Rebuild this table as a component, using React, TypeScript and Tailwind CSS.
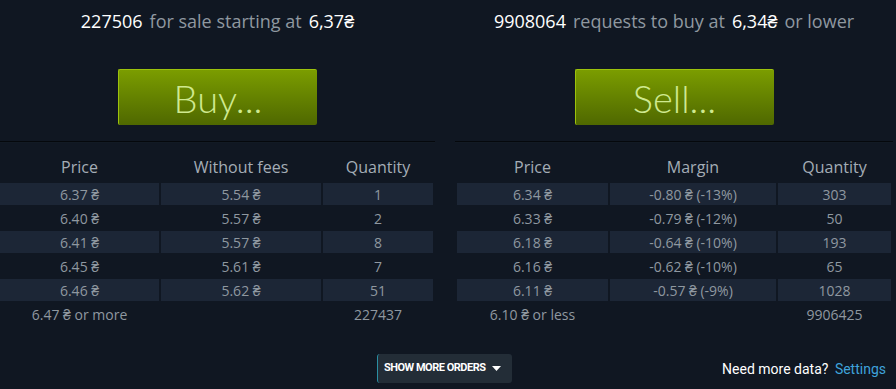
import type { ReactNode } from 'react'

type Row = [string, string, string]

const sellRows: Row[] = [
  ['6.37 ₴', '5.54 ₴', '1'],
  ['6.40 ₴', '5.57 ₴', '2'],
  ['6.41 ₴', '5.57 ₴', '8'],
  ['6.45 ₴', '5.61 ₴', '7'],
  ['6.46 ₴', '5.62 ₴', '51'],
]

const buyRows: Row[] = [
  ['6.34 ₴', '-0.80 ₴ (-13%)', '303'],
  ['6.33 ₴', '-0.79 ₴ (-12%)', '50'],
  ['6.18 ₴', '-0.64 ₴ (-10%)', '193'],
  ['6.16 ₴', '-0.62 ₴ (-10%)', '65'],
  ['6.11 ₴', '-0.57 ₴ (-9%)', '1028'],
]

interface PanelProps {
  summary: ReactNode
  action: string
  headers: Row
  rows: Row[]
  footer: [string, string]
  cols: string
  padLeft: string
}

function OrderPanel({ summary, action, headers, rows, footer, cols, padLeft }: PanelProps) {
  return (
    <div className="flex flex-col">
      <div className="flex h-[42px] items-center justify-center pt-[1px] text-[18px] text-[#8f98a0]">{summary}</div>
      <div className="mt-[27px] flex justify-center">
        <button className="flex h-[56px] w-[199px] items-center justify-center rounded-[2px] border-l border-t border-[#9cc20c] bg-gradient-to-b from-[#7b9d00] to-[#4f6800] font-['Lato',sans-serif] text-[38px] font-light leading-none text-[#cfe98f]">
          {action}
        </button>
      </div>
      <div className="mt-[16px] h-[2px] border-t border-[#05080c] bg-[#121a24]" />
      <div className={`grid gap-[2px] ${padLeft} ${cols} text-center text-[14px] text-[#8f98a0]`}>
        {headers.map((h) => (
          <div key={h} className="flex h-[38px] items-end justify-center pb-[2px] text-[16px] text-[#a4adb6]">
            {h}
          </div>
        ))}
        {rows.map((r, i) =>
          r.map((c, j) => (
            <div
              key={`${i}-${j}`}
              className={`flex h-[22px] items-center justify-center ${i % 2 === 0 ? 'bg-[#1c2636]' : ''}`}
            >
              {c}
            </div>
          )),
        )}
        <div className="flex h-[22px] items-center justify-center">{footer[0]}</div>
        <div />
        <div className="flex h-[22px] items-center justify-center">{footer[1]}</div>
      </div>
    </div>
  )
}

export default function App() {
  return (
    <div className="h-[389px] w-[896px] overflow-hidden bg-[#101722] font-['Open_Sans',sans-serif]">
      <div className="flex gap-[20px]">
        <div className="w-[435px]">
          <OrderPanel
            summary={
              <>
                <span className="mr-[7px] font-medium text-white">227506</span>
                for sale starting at
                <span className="ml-[7px] font-medium text-white">6,37₴</span>
              </>
            }
            action="Buy..."
            headers={['Price', 'Without fees', 'Quantity']}
            rows={sellRows}
            footer={['6.47 ₴ or more', '227437']}
            cols="grid-cols-[159px_160px_110px]"
            padLeft="pl-0"
          />
        </div>
        <div className="w-[438px]">
          <OrderPanel
            summary={
              <>
                <span className="mr-[7px] font-medium text-white">9908064</span>
                requests to buy at
                <span className="mx-[7px] font-medium text-white">6,34₴</span>
                or lower
              </>
            }
            action="Sell..."
            headers={['Price', 'Margin', 'Quantity']}
            rows={buyRows}
            footer={['6.10 ₴ or less', '9906425']}
            cols="grid-cols-[151px_166px_113px]"
            padLeft="pl-[2px]"
          />
        </div>
      </div>
      <div className="relative mt-[29px] flex h-[29px] items-center font-['Roboto',sans-serif]">
        <button className="ml-[377px] flex h-[29px] w-[135px] items-center gap-[7px] rounded-[3px] border-l border-[#2a8fa3] bg-[#232d37] pl-[6px] text-[11px] font-bold tracking-[-0.5px] text-white">
          SHOW MORE ORDERS
          <svg width="9" height="5" viewBox="0 0 9 5">
            <path d="M0 0h9L4.5 5z" fill="#fff" />
          </svg>
        </button>
        <div className="absolute right-[10px] top-[5px] text-[14px] text-white">
          Need more data? <span className="ml-[3px] text-[#3fa3db]">Settings</span>
        </div>
      </div>
    </div>
  )
}
